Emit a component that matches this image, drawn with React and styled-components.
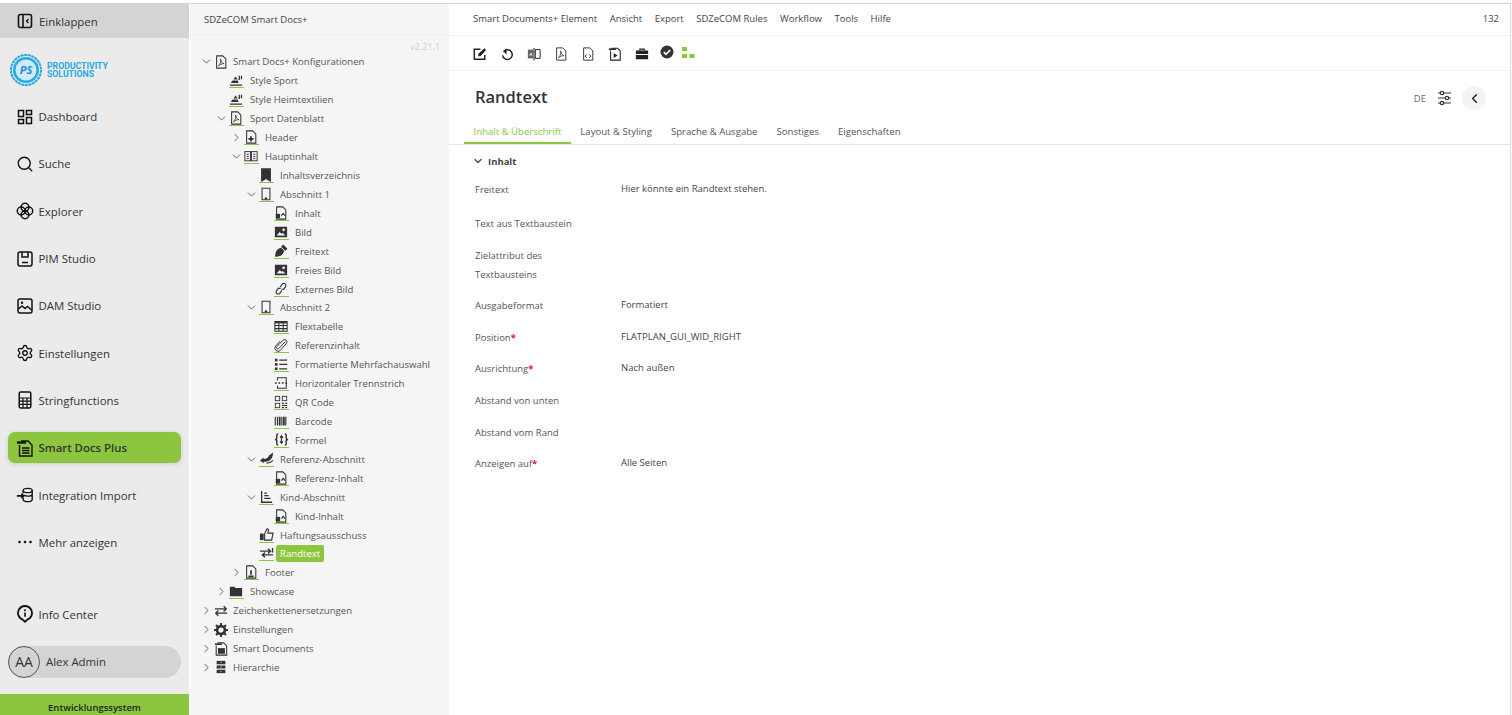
import React from 'react';
import styled, { createGlobalStyle } from 'styled-components';
import { ChevronDown, ChevronRight, ChevronLeft, Search, Settings } from 'lucide-react';

const GREEN = '#8cc63f';

const GlobalStyle = createGlobalStyle`
  html, body { margin: 0; padding: 0; height: 100%; background: #fff; }
  body { font-family: "Open Sans", "Noto Sans", sans-serif; overflow: hidden; }
  * { box-sizing: border-box; }
`;

const Svg = ({ children, size = 16, box = 16 }) => (
  <svg width={size} height={size} viewBox={`0 0 ${box} ${box}`} fill="none" stroke="currentColor" strokeWidth="1.2">
    {children}
  </svg>
);

const navIcons = {
  collapse: (
    <Svg size={16} box={16}>
      <rect x="1.5" y="1.5" width="13" height="13" rx="2" strokeWidth="1.6" />
      <path d="M6 2v12" strokeWidth="1.6" />
      <path d="M11.5 6 9.5 8l2 2" strokeWidth="1.3" />
    </Svg>
  ),
  dashboard: (
    <Svg size={16} box={16}>
      <g strokeWidth="1.5">
        <rect x="1.5" y="1.5" width="5" height="6" />
        <rect x="1.5" y="10.5" width="5" height="4" />
        <rect x="9.5" y="1.5" width="5" height="4" />
        <rect x="9.5" y="8.5" width="5" height="6" />
      </g>
    </Svg>
  ),
  explorer: (
    <Svg size={18} box={18}>
      <g strokeWidth="1.5">
        <circle cx="9" cy="5.2" r="3.9" />
        <circle cx="5.2" cy="9" r="3.9" />
        <circle cx="12.8" cy="9" r="3.9" />
        <circle cx="9" cy="12.8" r="3.9" />
      </g>
    </Svg>
  ),
  pim: (
    <Svg size={16} box={16}>
      <g strokeWidth="1.5">
        <rect x="1" y="1" width="14" height="14" rx="2" />
        <path d="M5 1v5h6V1M5 11.5h6" />
      </g>
    </Svg>
  ),
  dam: (
    <Svg size={16} box={16}>
      <g strokeWidth="1.5">
        <rect x="1" y="1" width="14" height="14" rx="2" />
        <path d="m1.5 11 3.5-3 3 2.5 2.5-2 4 3.5" />
      </g>
      <circle cx="5" cy="4.8" r="1.2" fill="currentColor" stroke="none" />
    </Svg>
  ),
  calculator: (
    <Svg size={18} box={18}>
      <rect x="3.2" y="1" width="11.6" height="16" rx="1.4" strokeWidth="1.5" />
      <path d="M3.5 7h11M3.5 10.200h11M3.500 13.400h11M7 7v10M11 7v10" strokeWidth="1.2" />
    </Svg>
  ),
  docs: (
    <Svg size={18} box={18}>
      <path d="M5 2h7l4 4v11H3.5V6" strokeWidth="1.4" />
      <path d="M1 3.5h9" strokeWidth="2.4" />
      <path d="M6 9h7.5M6 11.5h7.5M6 14h7.5" strokeWidth="1.3" />
    </Svg>
  ),
  integration: (
    <Svg size={20} box={20}>
      <g strokeWidth="1.5">
        <ellipse cx="13" cy="5" rx="5" ry="2.4" />
        <path d="M8 5v3M18 5v10c0 1.4-2.2 2.4-5 2.4s-5-1-5-2.4v-2M9 10c1 .9 2.4 1.3 4 1.3 2.8 0 5-1 5-2.4" />
      </g>
      <path d="M1 11h7M6 8.5 8.6 11 6 13.5" strokeWidth="1.8" />
    </Svg>
  ),
  more: (
    <Svg size={16} box={16}>
      <g fill="currentColor" stroke="none">
        <circle cx="2.5" cy="8" r="1.3" />
        <circle cx="8" cy="8" r="1.3" />
        <circle cx="13.5" cy="8" r="1.3" />
      </g>
    </Svg>
  ),
  info: (
    <Svg size={18} box={18}>
      <path d="M9 16.8 6.6 14.6A7 7 0 1 1 11.4 14.6Z" strokeWidth="1.8" />
      <path d="M9 7.5v4.2" strokeWidth="1.6" />
      <circle cx="9" cy="5.2" r="1" fill="currentColor" stroke="none" />
    </Svg>
  ),
};

const page = 'M3 1h7l3.5 3.5V15H3Z';

const treeIcons = {
  pdf: (
    <Svg size={14}>
      <path d={page} />
      <path d="M5 12.5c2-1.5 3-5 2.6-8 .4 3 2 5 3.9 5.500-2.500-.3-4.500.6-6.500 2.500Z" strokeWidth=".9" />
    </Svg>
  ),
  style: (
    <Svg size={14}>
      <g fill="currentColor" stroke="none">
        <path d="M1 13h14v1.500H1ZM2 11.500l2-3h6l1 3ZM5 7.500 7.500 4l2.500 3.500Z" />
        <path d="M11 3h1.500v5H11ZM13.500 3H15v4h-1.500Z" />
      </g>
    </Svg>
  ),
  header: (
    <Svg size={14}>
      <path d={page} />
      <path d="M8 7v6M5 10h6" strokeWidth="2" />
    </Svg>
  ),
  book: (
    <Svg size={14}>
      <g strokeWidth="1.100">
        <rect x="1" y="3" width="6.500" height="10.500" />
        <rect x="8.500" y="3" width="6.500" height="10.500" />
        <path d="M3 6h2.500M3 8.500h2.500M3 11h2.500M10.500 6H13M10.500 8.500H13M10.500 11H13" />
      </g>
    </Svg>
  ),
  mark: (
    <Svg size={14}>
      <path d="M3 1h10v14l-5-3-5 3Z" fill="currentColor" />
    </Svg>
  ),
  section: (
    <Svg size={14}>
      <path d="M3.500 1.500h9v13h-9Z" />
      <path d="m6.500 14 1.500-2 1.500 2" />
    </Svg>
  ),
  content: (
    <Svg size={14}>
      <path d={page} />
      <rect x="2" y="9" width="5" height="5" fill="currentColor" stroke="none" />
      <path d="m8.500 11 2-2.500 2 2.500" strokeWidth="1.400" />
    </Svg>
  ),
  image: (
    <Svg size={14}>
      <path d="M1 2h14v12H1Z" fill="currentColor" stroke="none" />
      <path d="m3 12 3.500-4 2 2 1.500-1 3 3Z" fill="#f5f5f5" stroke="none" />
      <circle cx="11" cy="5.500" r="1.500" fill="#f5f5f5" stroke="none" />
    </Svg>
  ),
  pen: (
    <Svg size={14}>
      <path d="M2 14c0-5 2-8 6-9l3 3c-1 4-4 6-9 6Z" fill="currentColor" />
      <path d="m9 3 1.500-1.500 4 4L13 7Z" fill="currentColor" />
    </Svg>
  ),
  link: (
    <Svg size={14}>
      <g strokeWidth="1.300">
        <path d="m7 6 2.500-3.500a2.400 2.400 0 0 1 4 2.500L11 8.500 8.500 8" />
        <path d="M9 9.500 6.500 13a2.400 2.400 0 0 1-4-2.500L5 7l2.500.5" />
      </g>
    </Svg>
  ),
  table: (
    <Svg size={14}>
      <path d="M1 3h14v11H1Z" />
      <path d="M1 4h14" strokeWidth="2" />
      <path d="M1 7.500h14M1 11h14M5.500 3v11M10.500 3v11" />
    </Svg>
  ),
  clip: (
    <Svg size={14}>
      <path d="m13 4-7.500 8a1.500 1.500 0 0 1-2.300-2l7-7.500a2.700 2.700 0 0 1 4 3.600L7 14.500a3.800 3.800 0 0 1-5.500-5L7 3.500" strokeWidth="1.100" />
    </Svg>
  ),
  list: (
    <Svg size={14}>
      <g fill="currentColor" stroke="none">
        <rect x="1" y="2" width="3" height="3" />
        <rect x="1" y="7" width="3" height="3" />
        <rect x="1" y="12" width="3" height="3" />
      </g>
      <path d="M6 3.500h9M6 8.500h9M6 13.500h9" strokeWidth="1.500" />
    </Svg>
  ),
  hr: (
    <Svg size={14}>
      <path d="M4 5V2h10v12H4v-3" />
      <path d="M1 8h2M5 8h2M9 8h2M13 8h2" strokeWidth="1.500" />
    </Svg>
  ),
  qr: (
    <Svg size={14}>
      <g strokeWidth="1">
        <rect x="1.500" y="1.500" width="5" height="5" />
        <rect x="9.500" y="1.500" width="5" height="5" />
        <rect x="1.500" y="9.500" width="5" height="5" />
        <path d="M9 9.500h2.500M13 9.500h2M9 12h6M9 14.500h2.500M13 14.500h2" strokeWidth="1.400" />
      </g>
    </Svg>
  ),
  barcode: (
    <Svg size={14}>
      <path d="M1.500 3v10M4 3v10M9 3v10M13.500 3v10" strokeWidth="1.300" />
      <path d="M6.500 3v10M11.300 3v10" strokeWidth="2" />
    </Svg>
  ),
  formula: (
    <Svg size={15}>
      <path d="M4.500 2C2.500 2 3 4 3 6S1 8 1 8s2 0 2 2-.5 4 1.500 4M11.500 2c2 0 1.500 2 1.500 4s2 2 2 2-2 0-2 2 .5 4-1.500 4" strokeWidth="1.500" />
      <path d="M8 4v8M6.500 6 8 4l1.500 2M6.500 10 8 12l1.500-2" strokeWidth="1.300" />
    </Svg>
  ),
  ref: (
    <Svg size={15}>
      <path d="M5 13 1 10l4-3v1.500c3 0 5-1.500 6-4l4-3c0 6-3 10-10 10Z" fill="currentColor" stroke="none" />
      <path d="M8 13c3 0 5-1 7-3" strokeWidth="1.300" />
    </Svg>
  ),
  child: (
    <Svg size={14}>
      <path d="M3 1v13h12" strokeWidth="1.500" />
      <path d="M6 3.500h3M6 6.500h5M6 9.500h7" strokeWidth="1.500" />
    </Svg>
  ),
  thumb: (
    <Svg size={15}>
      <rect x="1" y="7" width="4" height="7" fill="currentColor" stroke="none" />
      <path d="M6 7.500 8.500 2c1.500 0 2 1 1.500 2l-.5 2.500H15l-1.500 7.500H6Z" />
    </Svg>
  ),
  margin: (
    <Svg size={15}>
      <path d="M1 5.500h11M9.500 3l3 2.500-3 2.500M15 9.500H4M6.500 7l-3 2.500 3 2.500" strokeWidth="1.400" />
      <path d="M14.500 2v5" strokeWidth="1.400" />
    </Svg>
  ),
  footer: (
    <Svg size={14}>
      <path d={page} />
      <path d="M8 6v5M5 13h6" strokeWidth="2" />
    </Svg>
  ),
  folder: (
    <Svg size={14}>
      <path d="M1 3h5l1.500 1.500H15V14H1Z" fill="currentColor" stroke="none" />
    </Svg>
  ),
  swap: (
    <Svg size={14}>
      <path d="M1 5.500h13M11 2.500l3 3-3 3M15 10.500H2M5 7.500l-3 3 3 3" strokeWidth="1.500" />
    </Svg>
  ),
  gear: (
    <Svg size={14}>
      <path d="M8 3.500a4.500 4.500 0 1 0 0 9 4.500 4.500 0 0 0 0-9Z" strokeWidth="3" />
      <path d="M8 0v3M8 13v3M0 8h3M13 8h3M2.300 2.300l2 2M11.700 11.700l2 2M2.300 13.700l2-2M11.700 4.300l2-2" strokeWidth="2.200" />
    </Svg>
  ),
  smart: (
    <Svg size={14}>
      <path d="M4 1h7l3.500 3.500V15H2.500V4" />
      <path d="M1 2.500h8" strokeWidth="1.800" />
      <rect x="4.500" y="7" width="8" height="6.500" fill="currentColor" stroke="none" />
    </Svg>
  ),
  hierarchy: (
    <Svg size={14}>
      <path d="M3 1h10v14H3Z" fill="currentColor" stroke="none" />
      <path d="M1 5.500h14M1 10.500h14M8 2.500v1M8 7.500v1M8 12.500v1" stroke="#f5f5f5" strokeWidth="1.300" />
    </Svg>
  ),
};

const toolIcons = [
  <Svg key="edit" size={14}>
    <path d="M13.500 9v5h-12V2.500h7" strokeWidth="1.700" />
    <path d="M6 10.500V8l7-6.500 2 2L8.500 10.500Z" fill="currentColor" stroke="none" />
  </Svg>,
  <Svg key="undo" size={14}>
    <path d="M4 5.500a5.500 5.500 0 1 1-1 4" strokeWidth="1.700" />
    <path d="M7.500 1.500 4 5l3.500 3.500Z" fill="currentColor" stroke="none" />
  </Svg>,
  <Svg key="compare" size={14}>
    <path d="M1 3h6v10H1Z" fill="#666" stroke="none" />
    <path d="M8 1v14" />
    <path d="M9.500 3H15v10H9.500Z" strokeWidth="1.100" />
    <path d="M3 10l1.500-3L6 10M10.500 10 12 6l1.500 4" stroke="#fff" strokeWidth="1" />
  </Svg>,
  <Svg key="pdf" size={14}>
    <path d={page} strokeWidth="1" />
    <path d="M5 12.500c2-1.500 3-5 2.600-8 .4 3 2 5 3.900 5.500-2.500-.3-4.500.6-6.500 2.500Z" strokeWidth=".8" />
  </Svg>,
  <Svg key="code" size={14}>
    <path d={page} strokeWidth="1" />
    <path d="M6.500 8.500 4.800 10.500l1.700 2M9.500 8.500l1.700 2-1.700 2" strokeWidth="1.100" />
  </Svg>,
  <Svg key="run" size={14}>
    <path d="M4 1.500h7l3 3V15H3V4" strokeWidth="1.200" />
    <path d="M1 2.500h8" strokeWidth="1.800" />
    <path d="M6.500 7v5.500l4.500-2.700Z" fill="currentColor" stroke="none" />
  </Svg>,
  <Svg key="case" size={14}>
    <path d="M5.500 4V2.500h5V4" strokeWidth="1.400" />
    <path d="M1 4h14v4H1ZM1 9.200h14V14H1Z" fill="currentColor" stroke="none" />
  </Svg>,
];

const tree = [
  { l: 0, o: 'down', i: 'pdf', t: 'Smart Docs+ Konfigurationen' },
  { l: 1, i: 'style', t: 'Style Sport' },
  { l: 1, i: 'style', t: 'Style Heimtextilien' },
  { l: 1, o: 'down', i: 'pdf', t: 'Sport Datenblatt' },
  { l: 2, o: 'right', i: 'header', t: 'Header' },
  { l: 2, o: 'down', i: 'book', t: 'Hauptinhalt' },
  { l: 3, i: 'mark', t: 'Inhaltsverzeichnis' },
  { l: 3, o: 'down', i: 'section', t: 'Abschnitt 1' },
  { l: 4, i: 'content', t: 'Inhalt' },
  { l: 4, i: 'image', t: 'Bild' },
  { l: 4, i: 'pen', t: 'Freitext' },
  { l: 4, i: 'image', t: 'Freies Bild' },
  { l: 4, i: 'link', t: 'Externes Bild' },
  { l: 3, o: 'down', i: 'section', t: 'Abschnitt 2' },
  { l: 4, i: 'table', t: 'Flextabelle' },
  { l: 4, i: 'clip', t: 'Referenzinhalt' },
  { l: 4, i: 'list', t: 'Formatierte Mehrfachauswahl' },
  { l: 4, i: 'hr', t: 'Horizontaler Trennstrich' },
  { l: 4, i: 'qr', t: 'QR Code' },
  { l: 4, i: 'barcode', t: 'Barcode' },
  { l: 4, i: 'formula', t: 'Formel' },
  { l: 3, o: 'down', i: 'ref', t: 'Referenz-Abschnitt' },
  { l: 4, i: 'content', t: 'Referenz-Inhalt' },
  { l: 3, o: 'down', i: 'child', t: 'Kind-Abschnitt' },
  { l: 4, i: 'content', t: 'Kind-Inhalt' },
  { l: 3, i: 'thumb', t: 'Haftungsausschuss' },
  { l: 3, i: 'margin', t: 'Randtext', active: true },
  { l: 2, o: 'right', i: 'footer', t: 'Footer' },
  { l: 1, o: 'right', i: 'folder', t: 'Showcase' },
  { l: 0, o: 'right', i: 'swap', t: 'Zeichenkettenersetzungen' },
  { l: 0, o: 'right', i: 'gear', t: 'Einstellungen' },
  { l: 0, o: 'right', i: 'smart', t: 'Smart Documents' },
  { l: 0, o: 'right', i: 'hierarchy', t: 'Hierarchie' },
];

const navTop = [
  { t: 'Dashboard', i: navIcons.dashboard },
  { t: 'Suche', i: <Search size={18} strokeWidth={1.8} /> },
  { t: 'Explorer', i: navIcons.explorer },
  { t: 'PIM Studio', i: navIcons.pim },
  { t: 'DAM Studio', i: navIcons.dam },
  { t: 'Einstellungen', i: <Settings size={18} strokeWidth={1.8} /> },
  { t: 'Stringfunctions', i: navIcons.calculator },
  { t: 'Smart Docs Plus', i: navIcons.docs, active: true },
  { t: 'Integration Import', i: navIcons.integration },
  { t: 'Mehr anzeigen', i: navIcons.more },
];

const menu = ['Smart Documents+ Element', 'Ansicht', 'Export', 'SDZeCOM Rules', 'Workflow', 'Tools', 'Hilfe'];
const tabs = ['Inhalt & Überschrift', 'Layout & Styling', 'Sprache & Ausgabe', 'Sonstiges', 'Eigenschaften'];

const fields = [
  { label: 'Freitext', value: 'Hier könnte ein Randtext stehen.', h: 34 },
  { label: 'Text aus Textbaustein', h: 34 },
  { label: 'Zielattribut des Textbausteins', h: 50 },
  { label: 'Ausgabeformat', value: 'Formatiert' },
  { label: 'Position', value: 'FLATPLAN_GUI_WID_RIGHT', req: true },
  { label: 'Ausrichtung', value: 'Nach außen', req: true },
  { label: 'Abstand von unten' },
  { label: 'Abstand vom Rand' },
  { label: 'Anzeigen auf', value: 'Alle Seiten', req: true },
];

const App = () => (
  <Page>
    <GlobalStyle />
    <Sidebar>
      <CollapseBar>
        <NavIcon>{navIcons.collapse}</NavIcon>
        Einklappen
      </CollapseBar>
      <Logo>
        <svg width="32" height="32" viewBox="0 0 32 32">
          <circle cx="16" cy="16" r="15" fill="none" stroke="#29a9e0" strokeWidth="2" strokeDasharray="3 .6" />
          <circle cx="16" cy="16" r="13" fill="#29a9e0" />
          <circle cx="16" cy="16" r="10.500" fill="#cfeafa" />
          <text x="16" y="20" textAnchor="middle" fontSize="11" fontWeight="700" fontStyle="italic" fill="#1b8fd0" fontFamily="Open Sans">PS</text>
        </svg>
        <LogoText>
          <span>PRODUCTIVITY</span>
          <span>SOLUTIONS</span>
        </LogoText>
      </Logo>
      {navTop.map(({ t, i, active }) => (
        <NavRow key={t}>
          <NavItem $active={active}>
            <NavIcon>{i}</NavIcon>
            {t}
          </NavItem>
        </NavRow>
      ))}
      <Spacer />
      <NavRow>
        <NavItem>
          <NavIcon>{navIcons.info}</NavIcon>
          Info Center
        </NavItem>
      </NavRow>
      <UserRow>
        <UserPill>
          <Avatar>AA</Avatar>
          Alex Admin
        </UserPill>
      </UserRow>
      <SystemBar>Entwicklungssystem</SystemBar>
    </Sidebar>

    <TreePanel>
      <TreeHeader>SDZeCOM Smart Docs+</TreeHeader>
      <Version>v2.21.1</Version>
      {tree.map(({ l, o, i, t, active }) => (
        <TreeRow key={`${t}-${l}`} $level={l}>
          <Chevron>
            {o === 'down' && <ChevronDown size={13} strokeWidth={1.8} />}
            {o === 'right' && <ChevronRight size={13} strokeWidth={1.8} />}
          </Chevron>
          <TreeIcon $level={l}>{treeIcons[i]}</TreeIcon>
          <TreeLabel $active={active}>{t}</TreeLabel>
        </TreeRow>
      ))}
    </TreePanel>

    <Main>
      <MenuBar>
        {menu.map(m => (
          <MenuItem key={m}>{m}</MenuItem>
        ))}
        <Counter>132</Counter>
      </MenuBar>
      <Toolbar>
        {toolIcons.map(icon => (
          <ToolButton key={icon.key}>{icon}</ToolButton>
        ))}
        <ToolCheck>
          <svg width="14" height="14" viewBox="0 0 14 14">
            <circle cx="7" cy="7" r="6.500" fill="#333" />
            <path d="m3.800 7.200 2.200 2.200 4.200-4.400" fill="none" stroke="#fff" strokeWidth="1.700" />
          </svg>
        </ToolCheck>
        <ToolFlow>
          <svg width="13" height="12" viewBox="0 0 13 12">
            <g fill={GREEN}>
              <rect x="0" y="0" width="5" height="4" />
              <rect x="0" y="7" width="5" height="4" />
              <rect x="7.500" y="7" width="5" height="4" />
            </g>
          </svg>
        </ToolFlow>
      </Toolbar>
      <TitleRow>
        <Title>Randtext</Title>
        <TitleActions>
          <Lang>DE</Lang>
          <svg width="15" height="16" viewBox="0 0 15 16" fill="none" stroke="#333" strokeWidth="1.200">
            <path d="M1 3h13M1 8h13M1 13h13" />
            <g fill="#fff">
              <circle cx="5" cy="3" r="1.700" />
              <circle cx="10" cy="8" r="1.700" />
              <circle cx="5" cy="13" r="1.700" />
            </g>
          </svg>
          <RoundButton>
            <ChevronLeft size={15} strokeWidth={2.4} />
          </RoundButton>
        </TitleActions>
      </TitleRow>
      <Tabs>
        {tabs.map((tab, idx) => (
          <Tab key={tab} $active={idx === 0}>{tab}</Tab>
        ))}
      </Tabs>
      <SectionHead>
        <ChevronDown size={12} strokeWidth={2.4} />
        Inhalt
      </SectionHead>
      <Form>
        {fields.map(({ label, value, req, h }) => (
          <Field key={label} $height={h}>
            <Label>
              {label}
              {req && <Req>*</Req>}
            </Label>
            <Value>{value}</Value>
          </Field>
        ))}
      </Form>
    </Main>
  </Page>
);

export default App;

const Page = styled.div`
  display: flex;
  width: 1512px;
  height: 715px;
  padding-top: 3px;
  overflow: hidden;
  background: #fff;
`;

const Sidebar = styled.aside`
  display: flex;
  flex-direction: column;
  flex: 0 0 189px;
  background: #ebebeb;
  border-top: 1px solid #d4d4d4;
  color: #333;
  font-size: 11.4px;
`;

const CollapseBar = styled.div`
  display: flex;
  align-items: center;
  flex: 0 0 34px;
  padding-left: 16px;
  background: #d4d4d4;
`;

const NavIcon = styled.span`
  display: flex;
  justify-content: center;
  align-items: center;
  flex: 0 0 18px;
  min-width: 0;
  margin-right: 5px;
  color: #111;
`;

const Logo = styled.div`
  display: flex;
  align-items: center;
  flex: 0 0 55px;
  padding: 8px 0 0 10px;
`;

const LogoText = styled.div`
  display: flex;
  flex-direction: column;
  margin-left: 5px;
  color: #29a9e0;
  font-family: "Roboto", sans-serif;
  font-size: 8.7px;
  font-weight: 700;
  line-height: 8px;
`;

const NavRow = styled.div`
  display: flex;
  align-items: center;
  flex: 0 0 47.3px;
  padding: 0 8px;
`;

const NavItem = styled.div`
  display: flex;
  align-items: center;
  flex: 1;
  height: 31px;
  padding-left: 7.500px;
  border-radius: 7px;
  font-weight: ${({ $active }) => ($active ? 600 : 400)};
  background: ${({ $active }) => ($active ? GREEN : 'transparent')};
  box-shadow: ${({ $active }) => ($active ? '0 1px 4px rgba(0, 0, 0, 0.15)' : 'none')};
`;

const Spacer = styled.div`
  flex: 1;
`;

const UserRow = styled.div`
  display: flex;
  align-items: center;
  flex: 0 0 47px;
  margin-bottom: 9px;
  padding: 0 8px;
`;

const UserPill = styled.div`
  display: flex;
  align-items: center;
  flex: 1;
  height: 32px;
  border-radius: 16px;
  background: #d4d4d4;
`;

const Avatar = styled.span`
  display: flex;
  justify-content: center;
  align-items: center;
  width: 32px;
  height: 32px;
  margin-right: 6px;
  border: 1px solid #555;
  border-radius: 50%;
  font-size: 14px;
`;

const SystemBar = styled.div`
  display: flex;
  justify-content: center;
  align-items: flex-end;
  flex: 0 0 21px;
  padding-bottom: 1px;
  background: ${GREEN};
  color: #222;
  font-size: 9.5px;
  font-weight: 600;
`;

const TreePanel = styled.nav`
  flex: 0 0 259px;
  margin-left: 1px;
  background: #f5f5f5;
  border-top: 1px solid #d4d4d4;
  color: #555;
  font-size: 9.6px;
`;

const TreeHeader = styled.div`
  display: flex;
  align-items: center;
  height: 31px;
  padding-left: 14px;
  border-bottom: 1px solid #efefef;
  color: #444;
  font-size: 9.5px;
`;

const Version = styled.div`
  height: 17.5px;
  padding: 6px 9px 0 0;
  color: #cfcfcf;
  font-size: 9px;
  line-height: 11px;
  text-align: right;
`;

const TreeRow = styled.div`
  display: flex;
  align-items: center;
  height: 18.93px;
  padding-left: ${({ $level }) => 8.5 + $level * 15}px;
`;

const Chevron = styled.span`
  display: flex;
  justify-content: center;
  align-items: center;
  flex: 0 0 15px;
  color: #666;
`;

const TreeIcon = styled.span`
  display: flex;
  justify-content: center;
  align-items: center;
  flex: 0 0 ${({ $level }) => ($level === 0 ? 13 : 15)}px;
  height: 15px;
  margin-right: ${({ $level }) => ($level === 0 ? 5.5 : 6.5)}px;
  color: #333;
  border-bottom: ${({ $level }) => ($level === 0 ? 'none' : `1.5px solid ${GREEN}`)};
`;

const TreeLabel = styled.span`
  padding: ${({ $active }) => ($active ? '2px 4px' : '0')};
  margin-left: ${({ $active }) => ($active ? '-4px' : '0')};
  border-radius: 2px;
  background: ${({ $active }) => ($active ? GREEN : 'transparent')};
  color: ${({ $active }) => ($active ? '#fff' : 'inherit')};
  white-space: nowrap;
`;

const Main = styled.main`
  display: flex;
  flex-direction: column;
  flex: 1;
  margin-right: 1px;
  border-top: 1px solid #d4d4d4;
  border-right: 1px solid #d9d9d9;
  color: #444;
  font-size: 9.5px;
`;

const MenuBar = styled.div`
  display: flex;
  align-items: center;
  gap: 12.5px;
  flex: 0 0 32px;
  padding: 0 11px 3px 24px;
  border-bottom: 1px solid #f3f3f3;
`;

const MenuItem = styled.span`
  white-space: nowrap;
`;

const Counter = styled.span`
  margin-left: auto;
`;

const Toolbar = styled.div`
  display: flex;
  align-items: center;
  flex: 0 0 35px;
  padding-left: 18px;
  border-bottom: 1px solid #f3f3f3;
  color: #222;
`;

const ToolButton = styled.span`
  display: flex;
  justify-content: center;
  flex: 0 0 26.9px;
  padding-top: 2px;
`;

const ToolCheck = styled.span`
  display: flex;
  justify-content: center;
  flex: 0 0 24px;
  margin-bottom: 2px;
`;

const ToolFlow = styled.span`
  display: flex;
  justify-content: center;
  flex: 0 0 19px;
`;

const TitleRow = styled.div`
  display: flex;
  align-items: center;
  justify-content: space-between;
  flex: 0 0 52px;
  padding: 0 24px 0 26px;
`;

const Title = styled.h1`
  margin: 0 0 2px;
  color: #333;
  font-size: 16.5px;
  font-weight: 600;
`;

const TitleActions = styled.div`
  display: flex;
  align-items: center;
  gap: 10px;
  margin-top: 2px;
`;

const Lang = styled.span`
  margin-right: 1px;
  color: #666;
`;

const RoundButton = styled.span`
  display: flex;
  justify-content: center;
  align-items: center;
  width: 24px;
  height: 24px;
  border-radius: 50%;
  background: #f3f4f6;
  color: #222;
`;

const Tabs = styled.div`
  display: flex;
  flex: 0 0 21px;
  padding-left: 15px;
  border-bottom: 1px solid #e6e6e6;
  font-size: 9.6px;
`;

const Tab = styled.div`
  height: 21px;
  padding: 0 9.5px;
  line-height: 17px;
  border-bottom: 2px solid ${({ $active }) => ($active ? GREEN : 'transparent')};
  color: ${({ $active }) => ($active ? GREEN : '#555')};
  white-space: nowrap;
`;

const SectionHead = styled.div`
  display: flex;
  align-items: center;
  gap: 4px;
  flex: 0 0 27px;
  padding: 5px 0 0 23px;
  color: #444;
  font-weight: 700;
`;

const Form = styled.div`
  display: flex;
  flex-direction: column;
  padding-left: 26px;
`;

const Field = styled.div`
  display: grid;
  grid-template-columns: 146px 1fr;
  align-items: center;
  min-height: ${({ $height }) => $height || 31.6}px;
  line-height: 19px;
`;

const Label = styled.span`
  max-width: 110px;
  color: #555;
`;

const Req = styled.span`
  color: #e8112d;
  font-weight: 700;
`;

const Value = styled.span`
  margin-top: -2px;
  color: #444;
`;
